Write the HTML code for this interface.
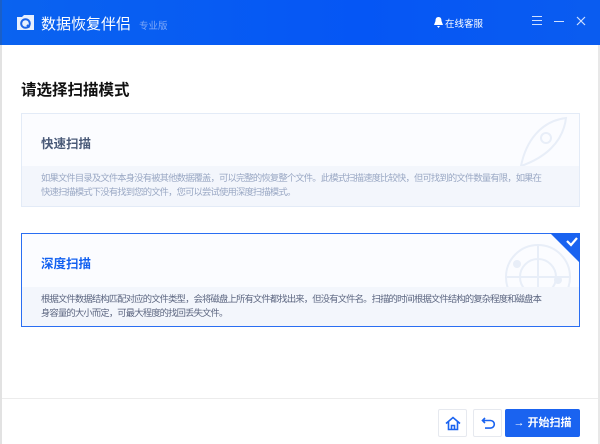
<!DOCTYPE html>
<html><head><meta charset="utf-8"><style>
*{margin:0;padding:0;box-sizing:border-box}
body{width:600px;height:444px;overflow:hidden;background:#fff;font-family:"Liberation Sans","Noto Sans CJK SC",sans-serif;position:relative}
.top{position:absolute;left:0;top:0;width:600px;height:45px;background:linear-gradient(90deg,#0a63f0,#0556f5 60%,#0a5cf0)}
.abs{position:absolute}
.card{position:absolute;left:21px;width:559px;border:1px solid #e3ebf7;background:#fbfcff}
.card .t{position:absolute;left:19px;font-size:12.5px;font-weight:bold}
.card .d{position:absolute;left:0;right:0;bottom:0;background:#f3f6fc;padding:5px 0 0 19px;font-size:9.3px;line-height:14px;white-space:nowrap;letter-spacing:-0.82px}
.btn{position:absolute;top:409px;height:28px;border:1px solid #e6e9ef;border-radius:2px;background:#fff}
</style></head><body>
<div class="top"></div>
<div class="abs" style="left:0;top:0;width:2px;height:45px;background:#1a5fc8"></div>
<svg class="abs" style="left:16px;top:14px" width="19" height="17" viewBox="0 0 19 17">
<path d="M1 3h5l2-2h10v15H1z" fill="#fff" opacity=".9"/>
<circle cx="9.5" cy="9.5" r="4.3" fill="none" stroke="#1a63e8" stroke-width="2"/>
<path d="M11 11l2.5 2.5" stroke="#1a63e8" stroke-width="2"/>
</svg>
<div class="abs" style="left:41px;top:13px;font-size:15px;color:#fff">数据恢复伴侣</div>
<div class="abs" style="left:139px;top:18px;font-size:9.5px;color:#7fa8f7">专业版</div>
<svg class="abs" style="left:434px;top:17px" width="9" height="11" viewBox="0 0 9 11"><path d="M4.5 0C2 0 1.5 2 1.5 4L0 8h9L7.5 4C7.5 2 7 0 4.5 0zM3 9h3l-1.5 2z" fill="#fff"/></svg>
<div class="abs" style="left:445px;top:16px;font-size:9.5px;color:#fff">在线客服</div>
<div class="abs" style="left:532px;top:16px;width:10px;height:9px;border-top:1px solid #cfe0ff;border-bottom:1px solid #cfe0ff"></div>
<div class="abs" style="left:532px;top:20px;width:10px;height:1px;background:#cfe0ff"></div>
<div class="abs" style="left:554px;top:21px;width:10px;height:1px;background:#cfe0ff"></div>
<svg class="abs" style="left:576px;top:16px" width="10" height="10"><path d="M1 1l8 8M9 1l-8 8" stroke="#cfe0ff" stroke-width="1.2"/></svg>
<div class="abs" style="left:21px;top:78px;font-size:15.5px;font-weight:bold;color:#111">请选择扫描模式</div>

<div class="card" style="top:113px;height:94px">
<div class="t" style="top:19px;color:#4a5a78">快速扫描</div>
<svg class="abs" style="right:8px;top:2px" width="60" height="52" viewBox="0 0 60 52"><g fill="none" stroke="#e8eef8" stroke-width="2"><path d="M10 50C15 25 30 5 55 2C52 27 33 42 10 50z"/><circle cx="35" cy="22" r="5"/></g></svg>
<div class="d" style="height:40px;color:#9aa8c4">如果文件目录及文件本身没有被其他数据覆盖，可以完整的恢复整个文件。此模式扫描速度比较快，但可找到的文件数量有限，如果在<br>快速扫描模式下没有找到您的文件，您可以尝试使用深度扫描模式。</div>
</div>

<div class="card" style="top:233px;height:94px;border:1.5px solid #2a6ef2">
<div class="t" style="top:19px;color:#1260f0">深度扫描</div>
<svg class="abs" style="right:6px;top:8px" width="70" height="54" viewBox="0 0 70 54"><g fill="none" stroke="#e8eef8" stroke-width="2"><circle cx="35" cy="35" r="32"/><circle cx="35" cy="35" r="18"/><path d="M35 3v60M3 35h64"/></g><circle cx="14" cy="22" r="4" fill="#e8eef8"/><circle cx="55" cy="38" r="4" fill="#e8eef8"/></svg>
<svg class="abs" style="right:-1px;top:-1px" width="30" height="30" viewBox="0 0 30 30"><path d="M0 0h30v30z" fill="#1a63f0"/><path d="M17 8l4 4 6-7" fill="none" stroke="#fff" stroke-width="2.2"/></svg>
<div class="d" style="height:39px;color:#5c6680">根据文件数据结构匹配对应的文件类型，会将磁盘上所有文件都找出来，但没有文件名。扫描的时间根据文件结构的复杂程度和磁盘本<br>身容量的大小而定，可最大程度的找回丢失文件。</div>
</div>

<div class="abs" style="left:0;top:398px;width:600px;height:1px;background:#ececec"></div>
<div class="abs" style="left:0;top:45px;width:2px;height:399px;background:#e2e2e2"></div>
<div class="abs" style="left:598px;top:45px;width:2px;height:399px;background:#e8e8e8"></div>
<div class="btn" style="left:438px;width:29px"><svg style="position:absolute;left:6px;top:6px" width="16" height="15" viewBox="0 0 16 15"><path d="M1 7.5L8 1.5l7 6M3.5 5.5V13.5h9V5.5M6.5 13.5v-4h3v4" fill="none" stroke="#1a63f0" stroke-width="1.6"/></svg></div>
<div class="btn" style="left:473px;width:29px"><svg style="position:absolute;left:7px;top:6px" width="15" height="15" viewBox="0 0 15 15"><path d="M4 2L1.5 4.5 4 7M1.5 4.5h8a3.8 3.8 0 010 7.6H4" fill="none" stroke="#1a63f0" stroke-width="1.6"/></svg></div>
<div class="btn" style="left:505px;width:75px;background:#1a63f0;border-color:#1a63f0;color:#fff;font-size:11px;font-weight:bold;line-height:26px;text-align:center">→ 开始扫描</div>
</body></html>
